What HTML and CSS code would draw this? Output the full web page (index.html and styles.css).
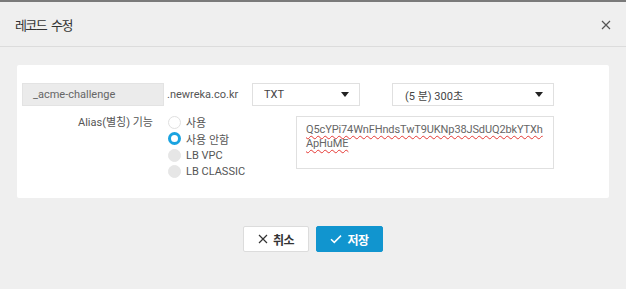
FILE: index.html
```html
<!DOCTYPE html>
<html lang="ko">
<head>
<meta charset="utf-8">
<link rel="stylesheet" href="styles.css">
</head>
<body>
<div class="modal">
  <div class="modal-header">
    <h1 class="modal-title">레코드 수정</h1>
    <button class="close" aria-label="닫기">
      <svg width="10" height="10" viewBox="0 0 10 10"><path d="M1 1L9 9M9 1L1 9" stroke="#555" stroke-width="1.2" fill="none"/></svg>
    </button>
  </div>
  <div class="modal-body">
    <div class="panel">
      <div class="row row-top">
        <div class="input readonly">_acme-challenge</div>
        <div class="domain">.newreka.co.kr</div>
        <div class="select select-type"><span>TXT</span><i class="caret"></i></div>
        <div class="select select-ttl"><span>(5 분) 300초</span><i class="caret"></i></div>
      </div>
      <div class="row row-alias">
        <div class="label">Alias(별칭) 기능</div>
        <div class="radios">
          <label class="radio"><span class="dot"></span>사용</label>
          <label class="radio"><span class="dot checked"></span>사용 안함</label>
          <label class="radio"><span class="dot disabled"></span>LB VPC</label>
          <label class="radio"><span class="dot disabled"></span>LB CLASSIC</label>
        </div>
        <div class="textarea"><span class="spell">Q5cYPi74WnFHndsTwT9UKNp38JSdUQ2bkYTXh</span><br><span class="spell">ApHuME</span></div>
      </div>
    </div>
  </div>
  <div class="modal-footer">
    <button class="btn btn-cancel">
      <svg width="10" height="10" viewBox="0 0 10 10"><path d="M1 1L9 9M9 1L1 9" stroke="#333" stroke-width="1.2" fill="none"/></svg>
      취소
    </button>
    <button class="btn btn-save">
      <svg width="12" height="10" viewBox="0 0 12 10"><path d="M1 5.2L4.3 8.4L11 1.6" stroke="#fff" stroke-width="1.5" fill="none"/></svg>
      저장
    </button>
  </div>
</div>
</body>
</html>
```
FILE: styles.css
```css
* { box-sizing: border-box; }
html, body {
  margin: 0;
  padding: 0;
  background: #efefef;
  font-family: Roboto, "Noto Sans CJK KR", sans-serif;
  font-size: 11px;
  color: #555;
}
.modal {
  width: 626px;
  height: 289px;
  border-top: 2px solid #7a7a7a;
  background: #efefef;
}
.modal-header {
  height: 45px;
  border-bottom: 1px solid #dcdcdc;
  display: flex;
  align-items: center;
  justify-content: space-between;
  padding: 0 14px 0 15px;
}
.modal-title {
  margin: 0;
  font-size: 13px;
  font-weight: 400;
  color: #333;
  font-family: "Noto Sans CJK KR", sans-serif;
  letter-spacing: -1.6px;
  word-spacing: 3px;
}
.close {
  border: 0;
  background: none;
  padding: 0;
  width: 12px;
  height: 12px;
  display: flex;
  align-items: center;
  justify-content: center;
  margin-top: 2px;
}
.modal-body {
  padding: 18px 17px 0;
}
.panel {
  background: #fff;
  height: 133px;
  border-radius: 2px;
  padding: 18px 5px 0;
}
.row { display: flex; }
.row-top { align-items: center; height: 23px; }
.input {
  width: 142px;
  height: 23px;
  border: 1px solid #e3e3e3;
  padding: 0 10px;
  display: flex;
  align-items: center;
  color: #666;
}
.readonly { background: #ebebeb; }
.domain {
  width: 88px;
  padding-left: 3px;
  color: #555;
}
.select {
  height: 23px;
  border: 1px solid #e0e0e0;
  display: flex;
  align-items: center;
  justify-content: space-between;
  padding: 0 10px 0 11px;
  color: #444;
}
.select-type { width: 108px; }
.select-ttl { width: 162px; margin-left: 32px; padding-left: 12px; }
.caret {
  width: 0;
  height: 0;
  border-left: 4px solid transparent;
  border-right: 4px solid transparent;
  border-top: 5px solid #222;
}
.row-alias { margin-top: 10px; }
.label {
  width: 131px;
  text-align: right;
  color: #555;
  line-height: 16px;
  margin-top: -1px;
}
.radios {
  width: 143px;
  padding-left: 15px;
  margin-top: -2px;
  display: flex;
  flex-direction: column;
}
.radio {
  height: 16.5px;
  display: flex;
  align-items: center;
  color: #555;
}
.dot {
  width: 13px;
  height: 13px;
  border-radius: 50%;
  border: 1px solid #e0e0e0;
  background: #fff;
  margin-right: 5px;
  flex: none;
}
.dot.checked {
  border: 3.5px solid #1aa3e0;
}
.dot.disabled {
  background: #e6e6e6;
  border-color: #e6e6e6;
}
.textarea {
  width: 258px;
  height: 53px;
  border: 1px solid #e0e0e0;
  padding: 6px 9px;
  line-height: 14px;
  color: #666;
  white-space: nowrap;
  letter-spacing: -0.12px;
}
.spell {
  text-decoration: underline wavy #e53935;
  text-decoration-thickness: 1px;
  text-underline-offset: 2px;
}
.modal-footer {
  display: flex;
  justify-content: center;
  gap: 7px;
  padding-top: 28px;
}
.btn {
  height: 26px;
  border-radius: 2px;
  font-family: "Noto Sans CJK KR", sans-serif;
  font-size: 12px;
  font-weight: 700;
  letter-spacing: -0.5px;
  display: flex;
  align-items: center;
  justify-content: center;
  gap: 5px;
  padding: 0;
}
.btn-cancel {
  width: 66px;
  background: #fff;
  border: 1px solid #dcdcdc;
  color: #333;
}
.btn-save {
  width: 67px;
  background: #1195cf;
  border: 1px solid #1195cf;
  color: #fff;
}
```
